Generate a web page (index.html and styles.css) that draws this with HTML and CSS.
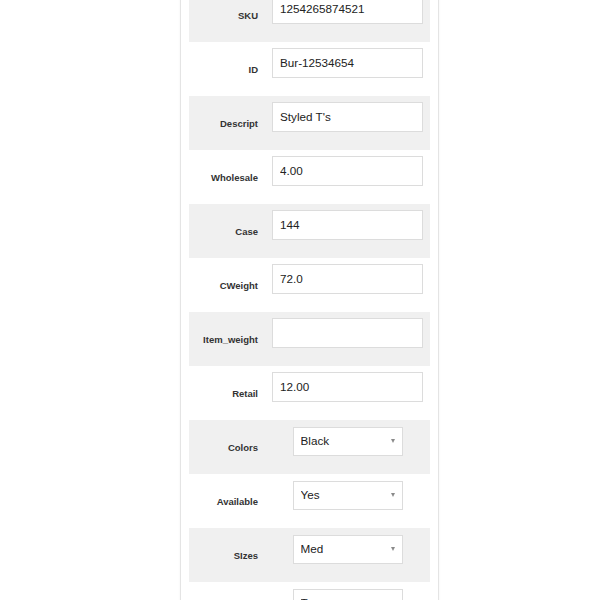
FILE: index.html
```html
<!DOCTYPE html>
<html>
<head>
<meta charset="utf-8">
<link rel="stylesheet" href="styles.css">
</head>
<body>
<div class="panel">
  <div class="row gray"><label class="lbl">SKU</label><div class="field"><input class="txt" value="1254265874521"></div></div>
  <div class="row"><label class="lbl">ID</label><div class="field"><input class="txt" value="Bur-12534654"></div></div>
  <div class="row gray"><label class="lbl">Descript</label><div class="field"><input class="txt" value="Styled T's"></div></div>
  <div class="row"><label class="lbl">Wholesale</label><div class="field"><input class="txt" value="4.00"></div></div>
  <div class="row gray"><label class="lbl">Case</label><div class="field"><input class="txt" value="144"></div></div>
  <div class="row"><label class="lbl">CWeight</label><div class="field"><input class="txt" value="72.0"></div></div>
  <div class="row gray"><label class="lbl">Item_weight</label><div class="field"><input class="txt" value=""></div></div>
  <div class="row"><label class="lbl">Retail</label><div class="field"><input class="txt" value="12.00"></div></div>
  <div class="row gray"><label class="lbl">Colors</label><div class="field sel-field"><span class="sel"><select><option>Black</option><option>White</option></select></span></div></div>
  <div class="row"><label class="lbl">Available</label><div class="field sel-field"><span class="sel"><select><option>Yes</option><option>No</option></select></span></div></div>
  <div class="row gray"><label class="lbl">SIzes</label><div class="field sel-field"><span class="sel"><select><option>Med</option><option>Small</option><option>Large</option></select></span></div></div>
  <div class="row"><label class="lbl">Type</label><div class="field sel-field"><span class="sel"><select><option>Tops</option></select></span></div></div>
</div>
</body>
</html>
```

FILE: styles.css
```css
html, body {
  margin: 0;
  padding: 0;
  background: #ffffff;
  font-family: "Liberation Sans", Arial, sans-serif;
}
.panel {
  margin-left: 180px;
  margin-top: -12px;
  width: 241px;
  padding: 0 8px;
  border: 1px solid #e4e4e4;
  border-top: none;
  box-shadow: 0 0 2px rgba(0, 0, 0, 0.06);
  background: #ffffff;
}
.row {
  display: grid;
  grid-template-columns: 69px 1fr;
  column-gap: 14px;
  height: 54px;
  background: #ffffff;
}
.row.gray {
  background: #f0f0f0;
}
.lbl {
  align-self: center;
  text-align: right;
  font-size: 9.5px;
  font-weight: bold;
  color: #333333;
  padding-top: 1px;
}
.field {
  padding-top: 6px;
  padding-right: 7px;
}
.txt {
  display: block;
  box-sizing: border-box;
  width: 151px;
  height: 30px;
  margin: 0;
  padding: 0 0 2px 7px;
  border: 1px solid #dcdcdc;
  border-radius: 0;
  background: #ffffff;
  font-family: "Liberation Sans", Arial, sans-serif;
  font-size: 11.7px;
  color: #222222;
  outline: none;
}
.sel-field {
  display: flex;
  justify-content: center;
  padding-top: 7px;
}
.sel {
  position: relative;
  display: block;
  width: 110px;
  height: 29px;
}
.sel select {
  -webkit-appearance: none;
  appearance: none;
  box-sizing: border-box;
  width: 110px;
  height: 29px;
  margin: 0;
  padding: 0 0 2px 7px;
  border: 1px solid #dcdcdc;
  border-radius: 0;
  background: #ffffff;
  font-family: "Liberation Sans", Arial, sans-serif;
  font-size: 11.7px;
  color: #222222;
  outline: none;
}
.sel::after {
  content: "";
  position: absolute;
  right: 8px;
  top: 12px;
  width: 0;
  height: 0;
  border-left: 2.5px solid transparent;
  border-right: 2.5px solid transparent;
  border-top: 4px solid #8a8a8a;
  pointer-events: none;
}
```
